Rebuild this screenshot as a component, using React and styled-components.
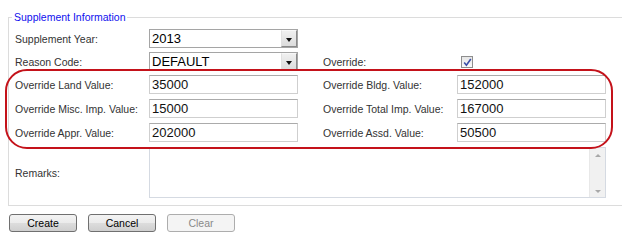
import React from "react";
import styled, { createGlobalStyle } from "styled-components";

const GlobalStyle = createGlobalStyle`
  html, body {
    margin: 0;
    padding: 0;
    background: #fff;
    overflow: hidden;
  }
  body {
    font-family: "Liberation Sans", Arial, sans-serif;
  }
`;

const Page = styled.div`
  position: relative;
  width: 622px;
  height: 249px;
  padding-top: 11px;
  box-sizing: border-box;
`;

const Fieldset = styled.fieldset`
  margin: 0 0 0 8px;
  padding: 6px 0 7px 3px;
  width: 640px;
  border: 1px solid #dcdcdc;
  border-right: none;
  box-sizing: border-box;
`;

const Legend = styled.legend`
  padding: 0 2px;
  color: #1010ee;
  font-size: 10.5px;
  line-height: 12px;
`;

const Grid = styled.div`
  display: grid;
  grid-template-columns: 134px 174px 134px 149px;
  grid-template-rows: 23px 23px 24px 24px 24px 51px;
  padding-left: 3px;
`;

const Label = styled.div`
  display: flex;
  align-items: center;
  height: ${(p) => (p.$tall ? "51px" : "19px")};
  font-size: 10.5px;
  color: #333;
`;

const Select = styled.div`
  display: flex;
  align-items: center;
  width: 149px;
  height: 19px;
  box-sizing: border-box;
  border: 1px solid #a5a5a5;
  font-size: 13px;
  color: #000;
  background: #fff;
`;

const SelectText = styled.span`
  flex: 1;
  padding-left: 2px;
`;

const ArrowBox = styled.span`
  display: flex;
  align-items: center;
  justify-content: center;
  width: 16px;
  height: 17px;
  box-sizing: border-box;
  background: linear-gradient(#f0f0f0, #dcdcdc);
  border: 1px solid;
  border-color: #f8f8f8 #8a8a8a #8a8a8a #e0e0e0;

  &::after {
    content: "";
    margin-top: 3px;
    border-left: 3.5px solid transparent;
    border-right: 3.5px solid transparent;
    border-top: 4px solid #111;
  }
`;

const Input = styled.input`
  width: 149px;
  height: 19px;
  box-sizing: border-box;
  margin: 0;
  padding: 0 2px;
  border: 1px solid #cfcfcf;
  border-top-color: #ababab;
  font-family: inherit;
  font-size: 13px;
  color: #111;
  outline: none;
`;

const Check = styled.span`
  display: flex;
  align-items: center;
  justify-content: center;
  width: 12px;
  height: 12px;
  margin: 4px 0 0 4px;
  box-sizing: border-box;
  border: 1px solid #8e8e8e;
  background: linear-gradient(#e6e6e6, #fafafa);
`;

const TextBox = styled.div`
  grid-column: 2 / 5;
  display: flex;
  width: 457px;
  height: 51px;
  box-sizing: border-box;
  border: 1px solid #d5dae2;
`;

const TextArea = styled.textarea`
  flex: 1;
  border: none;
  resize: none;
  outline: none;
  padding: 2px;
  font-family: inherit;
  font-size: 12px;
`;

const Scrollbar = styled.div`
  display: flex;
  flex-direction: column;
  justify-content: space-between;
  align-items: center;
  width: 16px;
  padding: 6px 0 4px;
  box-sizing: border-box;
  background: #f1f1f1;
  border-left: 1px solid #e8e8e8;
`;

const ScrollArrow = styled.span`
  border-left: 3px solid transparent;
  border-right: 3px solid transparent;
  ${(p) =>
    p.$up
      ? "border-bottom: 3px solid #a8a8a8;"
      : "border-top: 3px solid #a8a8a8;"}
`;

const Buttons = styled.div`
  display: flex;
  gap: 11px;
  margin: 8px 0 0 9px;
`;

const Button = styled.button`
  width: 68px;
  height: 18px;
  padding: 0;
  border: 1px solid #707070;
  border-radius: 3px;
  background: linear-gradient(#f3f3f3, #ebebeb 50%, #dddddd 50%, #cfcfcf);
  font-family: inherit;
  font-size: 10.5px;
  color: #000;

  &:disabled {
    border-color: #adadad;
    background: #f4f4f4;
    color: #8a8a8a;
  }
`;

const Highlight = styled.div`
  position: absolute;
  left: 5px;
  top: 69px;
  width: 608px;
  height: 80px;
  box-sizing: border-box;
  border: 2px solid #c4121a;
  border-radius: 22px;
  pointer-events: none;
`;

const Spacer = styled.div``;

const App = () => {
  return (
    <Page>
      <GlobalStyle />
      <Fieldset>
        <Legend>Supplement Information</Legend>
        <Grid>
          <Label>Supplement Year:</Label>
          <Select>
            <SelectText>2013</SelectText>
            <ArrowBox />
          </Select>
          <Spacer />
          <Spacer />

          <Label>Reason Code:</Label>
          <Select>
            <SelectText>DEFAULT</SelectText>
            <ArrowBox />
          </Select>
          <Label>Override:</Label>
          <Check>
            <svg width="9" height="9" viewBox="0 0 9 9">
              <path
                d="M1.2 4.6 L3.4 7.2 L7.8 1"
                fill="none"
                stroke="#3b4fa8"
                strokeWidth="1.6"
              />
            </svg>
          </Check>

          <Label>Override Land Value:</Label>
          <Input defaultValue="35000" />
          <Label>Override Bldg. Value:</Label>
          <Input defaultValue="152000" />

          <Label>Override Misc. Imp. Value:</Label>
          <Input defaultValue="15000" />
          <Label>Override Total Imp. Value:</Label>
          <Input defaultValue="167000" />

          <Label>Override Appr. Value:</Label>
          <Input defaultValue="202000" />
          <Label>Override Assd. Value:</Label>
          <Input defaultValue="50500" />

          <Label $tall>Remarks:</Label>
          <TextBox>
            <TextArea />
            <Scrollbar>
              <ScrollArrow $up />
              <ScrollArrow />
            </Scrollbar>
          </TextBox>
        </Grid>
      </Fieldset>
      <Buttons>
        <Button>Create</Button>
        <Button>Cancel</Button>
        <Button disabled>Clear</Button>
      </Buttons>
      <Highlight />
    </Page>
  );
};

export default App;
